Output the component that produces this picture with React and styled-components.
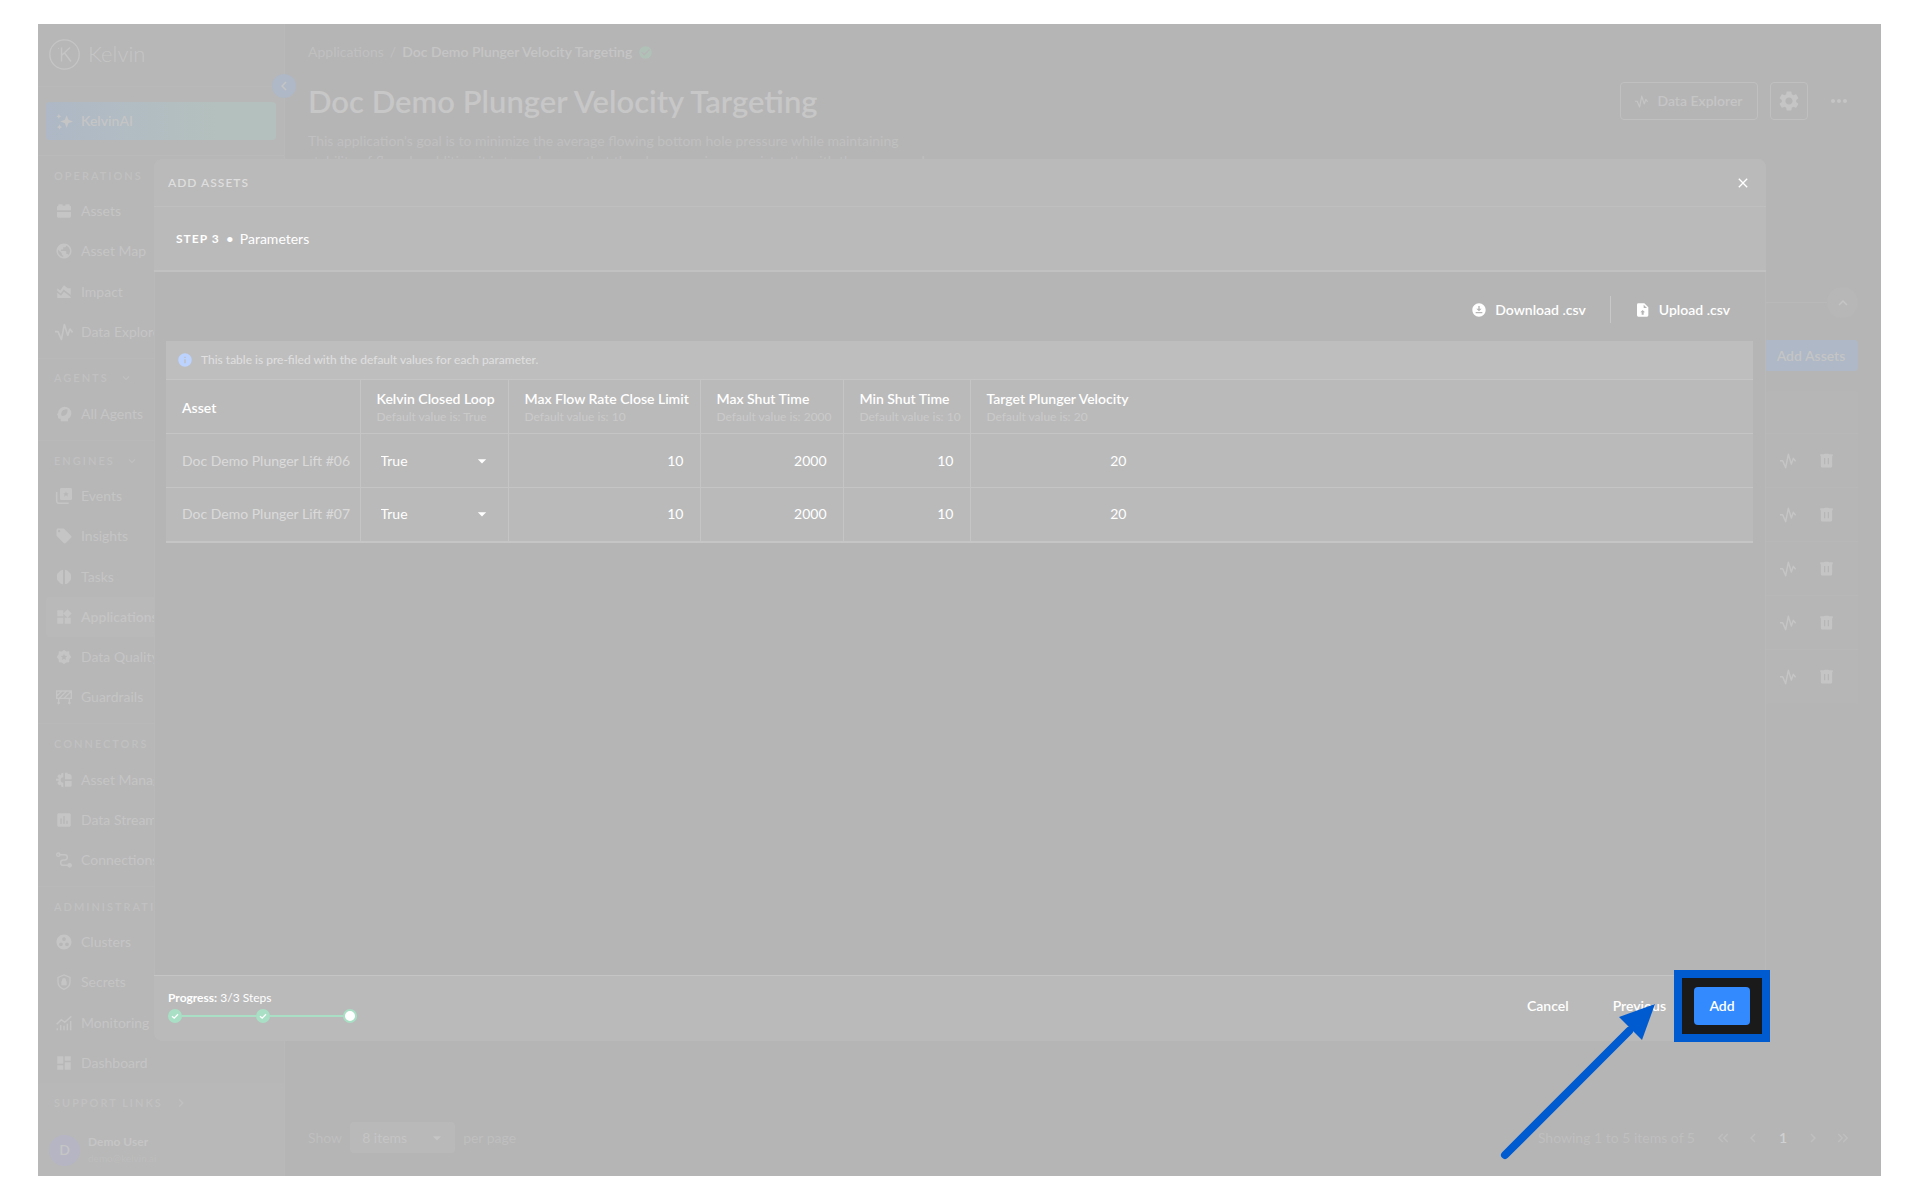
import React from "react";
import styled, { createGlobalStyle } from "styled-components";
import {
  MdArrowDropDown,
  MdAreaChart,
  MdCheckCircle,
  MdChevronLeft,
  MdChevronRight,
  MdClose,
  MdDashboard,
  MdDownloadForOffline,
  MdGroupWork,
  MdInfo,
  MdInsertChart,
  MdKeyboardArrowDown,
  MdKeyboardArrowUp,
  MdKeyboardDoubleArrowLeft,
  MdKeyboardDoubleArrowRight,
  MdLocalOffer,
  MdMoreHoriz,
  MdPublic,
  MdSettings,
  MdWidgets,
} from "react-icons/md";

const Glyph = ({ children, size = 16 }) => (
  <svg width={size} height={size} viewBox="0 0 24 24" fill="currentColor" aria-hidden="true">
    {children}
  </svg>
);

const Pulse = ({ size }) => (
  <Glyph size={size}>
    <path
      d="M0 11.500h4l4.500 10.500 4-20 4.500 14.500 3-8.500 3.500 4.500"
      fill="none"
      stroke="currentColor"
      strokeWidth="2.200"
      strokeLinejoin="round"
    />
  </Glyph>
);

const Brick = () => (
  <Glyph>
    <path d="M1.500 11V6a2 2 0 0 1 2-2V3a1 1 0 0 1 1-1H9a1 1 0 0 1 1 1v1h4V3a1 1 0 0 1 1-1h4.500a1 1 0 0 1 1 1v1a2 2 0 0 1 2 2v5zM1.500 13.500h21V20a2 2 0 0 1-2 2h-17a2 2 0 0 1-2-2z" />
  </Glyph>
);

const Agent = () => (
  <Glyph>
    <path
      fillRule="evenodd"
      d="M13 1a10 10 0 0 1 10 10c0 4-2 7-5 8.500V23H7v-4H5a2 2 0 0 1-2-2v-3H1l2-4A10 10 0 0 1 13 1zm4 4c-6 0-10 3-9 9l1 1c6 0 9-4 8-10z"
    />
  </Glyph>
);

const Events = () => (
  <Glyph>
    <path
      fillRule="evenodd"
      d="M8 0h14a2 2 0 0 1 2 2v14a2 2 0 0 1-2 2H8a2 2 0 0 1-2-2V2a2 2 0 0 1 2-2zm7 5-1 3h-3l2 2-1 3 3-2 3 2-1-3 2-2h-3z"
    />
    <path d="M1 6v13a4 4 0 0 0 4 4h14" fill="none" stroke="currentColor" strokeWidth="2.200" />
  </Glyph>
);

const Tasks = () => (
  <Glyph>
    <path d="M10.500 1v22C7 22.500 5 20.500 4.500 19 2 18 1 15 1.500 12 1 9 2 6 4.500 5 5 3.500 7 1.500 10.500 1zM13.500 1v22c3.500-.5 5.500-2.500 6-4 2.500-1 3.500-4 3-7 .5-3-.5-6-3-7-.5-1.500-2.500-3.500-6-4z" />
  </Glyph>
);

const Seal = () => (
  <Glyph>
    <path
      fillRule="evenodd"
      d="m12 1 3.300 2.700 4.400-.4.400 4.400L23 12l-2.900 3.300-.4 4.400-4.400.4L12 23l-3.300-2.900-4.400-.4-.4-4.400L1 12l2.900-4.300.4-4.400 4.400.4zm0 6-1.300 3.300-3.700.2 2.800 2.300-.9 3.600L12 14.500l3.100 1.900-.9-3.600 2.800-2.300-3.700-.2z"
    />
  </Glyph>
);

const Barrier = () => (
  <Glyph>
    <path
      d="M1 3h22v11H1zM4 14v9M20 14v9M2 21h4M18 21h4M1 11l8-8M5 14 16 3M12 14 22 4"
      fill="none"
      stroke="currentColor"
      strokeWidth="2"
    />
  </Glyph>
);

const AssetManagement = () => (
  <Glyph>
    <path d="M11 1v7a4 4 0 0 0 0 8v7l-3-1-.5-3-3 1L2 16.500 4 14v-1H0v-3h4V9L2 6.500l2.500-3L7.500 5 8 2zM13.500 1h4v2h2a4 4 0 0 1 4 4v4h-10zM13.500 13.500h10V20a2 2 0 0 1-2 2h-8z" />
  </Glyph>
);

const Connections = () => (
  <Glyph>
    <path
      d="M4 4h9a4 4 0 0 1 0 8h-2a4 4 0 0 0 0 8h9"
      fill="none"
      stroke="currentColor"
      strokeWidth="2.200"
    />
    <circle cx="3.500" cy="4" r="2.500" fill="none" stroke="currentColor" strokeWidth="2" />
    <circle cx="20.500" cy="20" r="3.500" />
  </Glyph>
);

const Secrets = () => (
  <Glyph>
    <path
      d="M12 1.500 3 5v7c0 5 4 9 9 11 5-2 9-6 9-11V5z"
      fill="none"
      stroke="currentColor"
      strokeWidth="2"
    />
    <path d="M8 11h1V9a3 3 0 0 1 6 0v2h1v6H8z" />
  </Glyph>
);

const Monitoring = () => (
  <Glyph>
    <path
      d="m1 14 7-7 5 4L23 2M2 23v-3M7 23v-8M12 23v-7M17 23V13M22 23V9"
      fill="none"
      stroke="currentColor"
      strokeWidth="2.200"
    />
  </Glyph>
);

const Sparkles = () => (
  <Glyph size={17}>
    <path d="m15 3 2.500 6.500L24 12l-6.500 2.500L15 21l-2.500-6.500L6 12l6.500-2.500zM4 1l1 2.500L7.500 5 5 6 4 8.500 3 6 .5 5 3 3.500zM5 16l1 2.500L8.500 20 6 21l-1 2.500L4 21l-2.500-1L4 18.500z" />
  </Glyph>
);

const Trash = () => (
  <Glyph size={15}>
    <path
      fillRule="evenodd"
      d="M2 2h6l1-1h6l1 1h6v3h-1v16a2 2 0 0 1-2 2H5a2 2 0 0 1-2-2V5H2zm6 6v10h2V8zm6 0v10h2V8z"
    />
  </Glyph>
);

const FileUpload = () => (
  <Glyph>
    <path
      fillRule="evenodd"
      d="M5 2h9l6 6v12a2 2 0 0 1-2 2H5a2 2 0 0 1-2-2V4a2 2 0 0 1 2-2zm8 2v5h5zM11.500 12 8 15.500h2V19h3v-3.500h2z"
    />
  </Glyph>
);

const StepDone = () => (
  <svg width="14" height="14" viewBox="0 0 14 14" aria-hidden="true">
    <circle cx="7" cy="7" r="7" fill="currentColor" />
    <path d="m4 7.200 2.200 2L10 5.200" fill="none" stroke="#fff" strokeWidth="1.300" />
  </svg>
);

const Logo = () => (
  <svg width="31" height="31" viewBox="0 0 31 31" fill="none" stroke="currentColor" aria-hidden="true">
    <circle cx="15.500" cy="15.500" r="14.700" strokeWidth="1.300" />
    <path d="M12.500 8.500v14M21 8.500l-8.500 8M15.500 14l6.500 8.500" strokeWidth="1.400" />
    <circle cx="9.500" cy="9.500" r=".6" fill="currentColor" stroke="none" />
  </svg>
);

const navSections = [
  {
    title: "Operations",
    items: [
      ["Assets", Brick],
      ["Asset Map", MdPublic],
      ["Impact", MdAreaChart],
      ["Data Explorer", Pulse],
    ],
  },
  { title: "Agents", items: [["All Agents", Agent]] },
  {
    title: "Engines",
    items: [
      ["Events", Events],
      ["Insights", MdLocalOffer],
      ["Tasks", Tasks],
      ["Applications", MdWidgets],
      ["Data Quality", Seal],
      ["Guardrails", Barrier],
    ],
  },
  {
    title: "Connectors",
    items: [
      ["Asset Management", AssetManagement],
      ["Data Streams", MdInsertChart],
      ["Connections", Connections],
    ],
  },
  {
    title: "Administration",
    items: [
      ["Clusters", MdGroupWork],
      ["Secrets", Secrets],
      ["Monitoring", Monitoring],
      ["Dashboard", MdDashboard],
    ],
  },
];

const columns = [
  { name: "Kelvin Closed Loop", value: "True", width: 148 },
  { name: "Max Flow Rate Close Limit", value: "10", width: 192 },
  { name: "Max Shut Time", value: "2000", width: 143 },
  { name: "Min Shut Time", value: "10", width: 127 },
  { name: "Target Plunger Velocity", value: "20" },
];

const assets = ["Doc Demo Plunger Lift #06", "Doc Demo Plunger Lift #07"];

function Sidebar() {
  return (
    <Aside>
      <Brand>
        <Logo />
        <span>Kelvin</span>
      </Brand>
      <CollapseButton aria-label="Collapse menu">
        <MdChevronLeft size={18} />
      </CollapseButton>
      <AiArea>
        <AiButton>
          <Sparkles />
          KelvinAI
        </AiButton>
      </AiArea>
      <Nav>
        {navSections.map(({ title, items }) => (
          <NavSection key={title} $count={items.length}>
            <SectionTitle>
              {title}
              <MdKeyboardArrowDown size={14} />
            </SectionTitle>
            {items.map(([label, Icon]) => (
              <NavLink
                key={label}
                href="/"
                $active={label === "Applications"}
                onClick={(e) => e.preventDefault()}
              >
                <Icon size={18} />
                {label}
              </NavLink>
            ))}
          </NavSection>
        ))}
      </Nav>
      <AsideFooter>
        <SectionTitle>
          Support Links
          <MdChevronRight size={16} />
        </SectionTitle>
        <User>
          <Avatar>D</Avatar>
          <div>
            <strong>Demo User</strong>
            <small>demo@kelvin.ai</small>
          </div>
        </User>
      </AsideFooter>
    </Aside>
  );
}

function ApplicationPage() {
  return (
    <Main>
      <Breadcrumb>
        <a href="/" onClick={(e) => e.preventDefault()}>
          Applications
        </a>
        <span>/</span>
        <strong>Doc Demo Plunger Velocity Targeting</strong>
        <MdCheckCircle size={15} />
      </Breadcrumb>
      <TitleRow>
        <h1>Doc Demo Plunger Velocity Targeting</h1>
        <OutlineButton>
          <Pulse size={13} />
          Data Explorer
        </OutlineButton>
        <OutlineButton $square aria-label="Settings">
          <MdSettings size={24} />
        </OutlineButton>
        <OutlineButton $square $bare aria-label="More">
          <MdMoreHoriz size={24} />
        </OutlineButton>
      </TitleRow>
      <Description>
        This application's goal is to minimize the average flowing bottom hole pressure while
        maintaining
        <br />
        stability of flow. In addition it is to make sure that the plunger arrives consistently
        with the proper column
      </Description>
      <Fold>
        <hr />
        <button aria-label="Collapse section">
          <MdKeyboardArrowUp size={18} />
        </button>
      </Fold>
      <AddAssets>Add Assets</AddAssets>
      <AssetList>
        {[1, 2, 3, 4, 5].map((row) => (
          <li key={row}>
            <button aria-label="Explore data">
              <Pulse size={16} />
            </button>
            <button aria-label="Delete asset">
              <Trash />
            </button>
          </li>
        ))}
      </AssetList>
      <Pagination>
        <label htmlFor="page-size">Show</label>
        <SelectBox $boxed>
          <select id="page-size" defaultValue="8 items">
            <option>8 items</option>
          </select>
          <MdArrowDropDown size={20} />
        </SelectBox>
        <span>per page</span>
        <Pages>
          <span>Showing 1 to 5 items of 5</span>
          <button aria-label="First page">
            <MdKeyboardDoubleArrowLeft size={18} />
          </button>
          <button aria-label="Previous page">
            <MdChevronLeft size={18} />
          </button>
          <button aria-current="page">1</button>
          <button aria-label="Next page">
            <MdChevronRight size={18} />
          </button>
          <button aria-label="Last page">
            <MdKeyboardDoubleArrowRight size={18} />
          </button>
        </Pages>
      </Pagination>
    </Main>
  );
}

function ParametersTable() {
  return (
    <Table>
      <thead>
        <tr>
          <Th $width={194}>Asset</Th>
          {columns.map(({ name, value, width }) => (
            <Th key={name} $width={width}>
              {name}
              <small>Default value is: {value}</small>
            </Th>
          ))}
        </tr>
      </thead>
      <tbody>
        {assets.map((asset) => (
          <tr key={asset}>
            <Td>{asset}</Td>
            <Td>
              <SelectBox>
                <select aria-label={`${asset} Kelvin Closed Loop`} defaultValue="True">
                  <option>True</option>
                  <option>False</option>
                </select>
                <MdArrowDropDown size={20} />
              </SelectBox>
            </Td>
            {columns.slice(1).map(({ name, value }) => (
              <Td key={name}>
                <NumberInput aria-label={`${asset} ${name}`} defaultValue={value} />
              </Td>
            ))}
          </tr>
        ))}
      </tbody>
    </Table>
  );
}

function AddAssetsModal() {
  return (
    <Modal role="dialog" aria-labelledby="modal-title">
      <ModalHeader>
        <h2 id="modal-title">Add Assets</h2>
        <button aria-label="Close">
          <MdClose size={16} />
        </button>
      </ModalHeader>
      <StepBar>
        <strong>Step 3</strong>
        <span>•</span>
        <span>Parameters</span>
      </StepBar>
      <ModalBody>
        <Toolbar>
          <TextButton>
            <MdDownloadForOffline size={16} />
            Download .csv
          </TextButton>
          <i />
          <TextButton>
            <FileUpload />
            Upload .csv
          </TextButton>
        </Toolbar>
        <Banner>
          <MdInfo size={16} />
          This table is pre-filed with the default values for each parameter.
        </Banner>
        <ParametersTable />
      </ModalBody>
      <ModalFooter>
        <Progress>
          <p>
            <strong>Progress:</strong> 3/3 Steps
          </p>
          <Steps>
            <StepDone />
            <hr />
            <StepDone />
            <hr />
            <CurrentStep />
          </Steps>
        </Progress>
        <TextButton>Cancel</TextButton>
        <TextButton>Previous</TextButton>
        <Highlight>
          <AddButton>Add</AddButton>
          <Arrow width="160" height="160" viewBox="0 0 160 160" aria-hidden="true">
            <path d="M8 152 132 28" stroke="#005bd0" strokeWidth="8" strokeLinecap="round" />
            <path d="M158 1 122 14l23 23z" fill="#005bd0" />
          </Arrow>
        </Highlight>
      </ModalFooter>
    </Modal>
  );
}

export default function App() {
  return (
    <Page>
      <GlobalStyle />
      <Screen>
        <Sidebar />
        <ApplicationPage />
        <AddAssetsModal />
      </Screen>
    </Page>
  );
}

const GlobalStyle = createGlobalStyle`
  *, *::before, *::after {
    box-sizing: border-box;
  }
  body {
    margin: 0;
    background: #fff;
    font: 400 14px/20px Lato, "Liberation Sans", sans-serif;
  }
  h1, h2, p, ul, hr {
    margin: 0;
    padding: 0;
  }
  hr {
    border: 0;
  }
  a {
    color: inherit;
    text-decoration: none;
  }
  button, select, input {
    padding: 0;
    border: 0;
    background: none;
    color: inherit;
    font: inherit;
  }
  button {
    display: inline-flex;
    align-items: center;
    justify-content: center;
  }
  svg {
    flex: none;
  }
`;

const Page = styled.div`
  min-height: 100vh;
  padding: 24px 39px 24px 38px;
  display: flex;
`;

const Screen = styled.div`
  position: relative;
  flex: 1;
  display: grid;
  grid-template-columns: 247px 1fr;
  background: #b5b5b5;
  color: #c5c5c5;
`;

const Aside = styled.aside`
  position: relative;
  display: flex;
  flex-direction: column;
  background: #b7b7b7;
  border-right: 1px solid #b9b9b9;
`;

const Brand = styled.div`
  display: flex;
  align-items: center;
  gap: 8px;
  height: 63px;
  padding: 0 11px 2px;
  border-bottom: 1px solid #b9b9b9;
  & > span {
    font-size: 22px;
    font-weight: 300;
  }
`;

const CollapseButton = styled.button`
  position: absolute;
  top: 50px;
  right: -12px;
  width: 24px;
  height: 24px;
  border-radius: 50%;
  background: #aeb8c6;
`;

const AiArea = styled.div`
  padding: 15px 8px;
  border-bottom: 1px solid #bababa;
`;

const AiButton = styled.button`
  width: 100%;
  height: 38px;
  padding: 0 10px;
  justify-content: flex-start;
  gap: 8px;
  border-radius: 4px;
  background: linear-gradient(90deg, #aeb8c6, #b2bdc2 45%, #b4c0bd 75%);
  font-weight: 600;
`;

const Nav = styled.nav`
  flex: 1;
  display: flex;
  flex-direction: column;
`;

const NavSection = styled.div`
  flex: ${({ $count }) => $count} 0 auto;
  display: flex;
  flex-direction: column;
  padding: 0 8px 6px;
  border-bottom: 1px solid #b9b9b9;
  &:last-child {
    padding-bottom: 0;
    border-bottom: 0;
  }
`;

const SectionTitle = styled.div`
  display: flex;
  align-items: center;
  gap: 10px;
  height: 35px;
  padding: 4px 8px 0;
  color: #c1c1c1;
  font-size: 11px;
  font-weight: 600;
  letter-spacing: 2px;
  text-transform: uppercase;
`;

const NavLink = styled.a`
  flex: 1;
  display: flex;
  align-items: center;
  gap: 8px;
  min-height: 38px;
  padding: 0 9px;
  border-radius: 4px;
  white-space: nowrap;
  background: ${({ $active }) => ($active ? "#b9b9b9" : "none")};
  font-weight: ${({ $active }) => ($active ? 600 : 400)};
  & > svg {
    width: 18px;
  }
`;

const AsideFooter = styled.div`
  height: 93px;
  padding: 0 8px;
  background: #b8b8b8;
`;

const User = styled.div`
  display: flex;
  align-items: center;
  gap: 8px;
  padding: 16px 3px 0;
  & strong,
  & small {
    display: block;
    font-size: 12px;
    line-height: 16px;
  }
  & small {
    color: #bdbdbd;
    font-size: 10px;
  }
`;

const Avatar = styled.span`
  display: grid;
  place-items: center;
  width: 31px;
  height: 31px;
  border-radius: 50%;
  background: #b5b5c4;
  font-weight: 600;
`;

const Main = styled.main`
  display: flex;
  flex-direction: column;
  padding: 18px 23px;
`;

const Breadcrumb = styled.div`
  display: flex;
  align-items: center;
  gap: 6px;
  color: #c0c0c0;
  & > strong {
    color: #c5c5c5;
    font-weight: 600;
  }
  & > svg {
    color: #b0c2b8;
  }
`;

const TitleRow = styled.div`
  display: flex;
  align-items: center;
  gap: 12px;
  padding: 20px 0 11px;
  & > h1 {
    flex: 1;
    color: #c7c7c7;
    font-size: 31px;
    line-height: 38px;
    font-weight: 600;
  }
`;

const OutlineButton = styled.button`
  width: ${({ $square }) => ($square ? "38px" : "138px")};
  height: 38px;
  gap: 9px;
  border: 1px solid ${({ $bare }) => ($bare ? "transparent" : "#c0c0c0")};
  border-radius: 4px;
  font-weight: 600;
`;

const Description = styled.p`
  height: 156px;
  color: #c0c0c0;
`;

const Fold = styled.div`
  display: flex;
  align-items: center;
  & > hr {
    flex: 1;
    height: 1px;
    background: #b9b9b9;
  }
  & > button {
    width: 31px;
    height: 31px;
    border-radius: 50%;
    background: #b7b7b7;
  }
`;

const AddAssets = styled.button`
  align-self: flex-end;
  width: 94px;
  height: 31px;
  margin-top: 22px;
  border-radius: 4px;
  background: #aeb8c6;
  font-weight: 600;
`;

const AssetList = styled.ul`
  margin-top: 20px;
  padding-top: 42px;
  background: #b6b6b6;
  list-style: none;
  & > li {
    display: flex;
    align-items: center;
    justify-content: flex-end;
    height: 54px;
    padding-right: 13px;
    border-top: 1px solid #b8b8b8;
  }
  & button {
    width: 38px;
    height: 38px;
  }
`;

const SelectBox = styled.span`
  position: relative;
  display: flex;
  align-items: center;
  width: ${({ $boxed }) => ($boxed ? "105px" : "auto")};
  height: 31px;
  border-radius: 4px;
  background: ${({ $boxed }) => ($boxed ? "#b9b9b9" : "none")};
  color: ${({ $boxed }) => ($boxed ? "#c5c5c5" : "#fff")};
  & > select {
    width: 100%;
    height: 100%;
    padding: 0 ${({ $boxed }) => ($boxed ? "12px" : "4px")};
    appearance: none;
    outline: none;
  }
  & > svg {
    position: absolute;
    right: ${({ $boxed }) => ($boxed ? "8px" : "0")};
    pointer-events: none;
  }
`;

const Pagination = styled.div`
  display: flex;
  align-items: center;
  gap: 8px;
  margin-top: auto;
  padding-bottom: 5px;
  color: #bfbfbf;
`;

const Pages = styled.div`
  display: flex;
  align-items: center;
  margin-left: auto;
  & > span {
    margin-right: 13px;
  }
  & > button {
    width: 30px;
    height: 31px;
  }
  & > button[aria-current] {
    color: #d0d0d0;
    font-weight: 600;
  }
`;

const Modal = styled.section`
  position: absolute;
  inset: 135px 115px 135px 116px;
  display: flex;
  flex-direction: column;
  border-radius: 8px;
  background: #bababa;
  color: #fff;
`;

const ModalHeader = styled.header`
  display: flex;
  align-items: center;
  justify-content: space-between;
  height: 48px;
  padding: 0 15px 0 14px;
  border-bottom: 1px solid #bfbfbf;
  & > h2 {
    color: #dedede;
    font-size: 12px;
    font-weight: 600;
    letter-spacing: 1px;
    text-transform: uppercase;
  }
`;

const StepBar = styled.div`
  display: flex;
  align-items: center;
  gap: 6px;
  height: 65px;
  padding: 0 22px;
  border-bottom: 2px solid #c1c1c1;
  & > strong {
    font-size: 12px;
    letter-spacing: 1px;
    text-transform: uppercase;
  }
`;

const ModalBody = styled.div`
  flex: 1;
  padding: 0 12px 0 11px;
  border: solid #b9b9b9;
  border-width: 0 1px;
  background: #b5b5b5;
`;

const Toolbar = styled.div`
  display: flex;
  align-items: center;
  justify-content: flex-end;
  height: 69px;
  padding: 6px 7px 0;
  & > i {
    width: 1px;
    height: 27px;
    margin: 0 8px;
    background: #c8c8c8;
  }
`;

const TextButton = styled.button`
  height: 38px;
  gap: 8px;
  padding: 0 16px;
  font-weight: 600;
`;

const Banner = styled.div`
  display: flex;
  align-items: center;
  gap: 8px;
  height: 38px;
  padding: 0 11px;
  background: #bebebe;
  color: #e0e0e0;
  font-size: 12px;
  & > svg {
    color: #bcd3ff;
  }
`;

const Table = styled.table`
  width: 100%;
  table-layout: fixed;
  border-collapse: collapse;
  background: #bababa;
  & tr {
    height: 54px;
    border-top: 1px solid #c5c5c5;
  }
  & tbody {
    border-bottom: 2px solid #c5c5c5;
  }
`;

const Th = styled.th`
  width: ${({ $width }) => ($width ? `${$width}px` : "auto")};
  padding: 2px 16px 0;
  border-right: 1px solid #c5c5c5;
  font-weight: 600;
  line-height: 18px;
  text-align: left;
  white-space: nowrap;
  &:last-child {
    border-right: 0;
  }
  & > small {
    display: block;
    color: #cacaca;
    font-size: 12px;
    font-weight: 400;
  }
`;

const Td = styled.td`
  padding: 0 16px;
  border-right: 1px solid #c5c5c5;
  white-space: nowrap;
  &:first-child {
    color: #dadada;
  }
  &:last-child {
    border-right: 0;
  }
`;

const NumberInput = styled.input`
  display: block;
  width: 100%;
  max-width: 140px;
  margin-left: auto;
  text-align: right;
  outline: none;
  td:last-child > & {
    margin-left: 0;
  }
`;

const ModalFooter = styled.footer`
  display: flex;
  align-items: center;
  gap: 12px;
  height: 66px;
  padding: 0 16px 5px 14px;
  border-top: 1px solid #c5c5c5;
`;

const Progress = styled.div`
  width: 189px;
  margin-right: auto;
  font-size: 12px;
`;

const Steps = styled.div`
  display: flex;
  align-items: center;
  height: 16px;
  color: #a9e0c5;
  & > hr {
    flex: 1;
    height: 2px;
    background: #a9e0c5;
  }
`;

const CurrentStep = styled.span`
  width: 14px;
  height: 14px;
  border: 2px solid #a9e0c5;
  border-radius: 50%;
  background: #fff;
`;

/* spotlight frame drawn round the button, reaching past the dialog edge */
const Highlight = styled.div`
  position: relative;
  isolation: isolate;
  &::before {
    content: "";
    position: absolute;
    z-index: -1;
    inset: -17px -20px;
    border: 8px solid #005bd0;
    background: #1a1a1a;
  }
`;

const AddButton = styled.button`
  width: 56px;
  height: 38px;
  border-radius: 4px;
  background: #338aff;
  font-weight: 600;
`;

const Arrow = styled.svg`
  position: absolute;
  top: 16px;
  right: 93px;
  pointer-events: none;
`;
